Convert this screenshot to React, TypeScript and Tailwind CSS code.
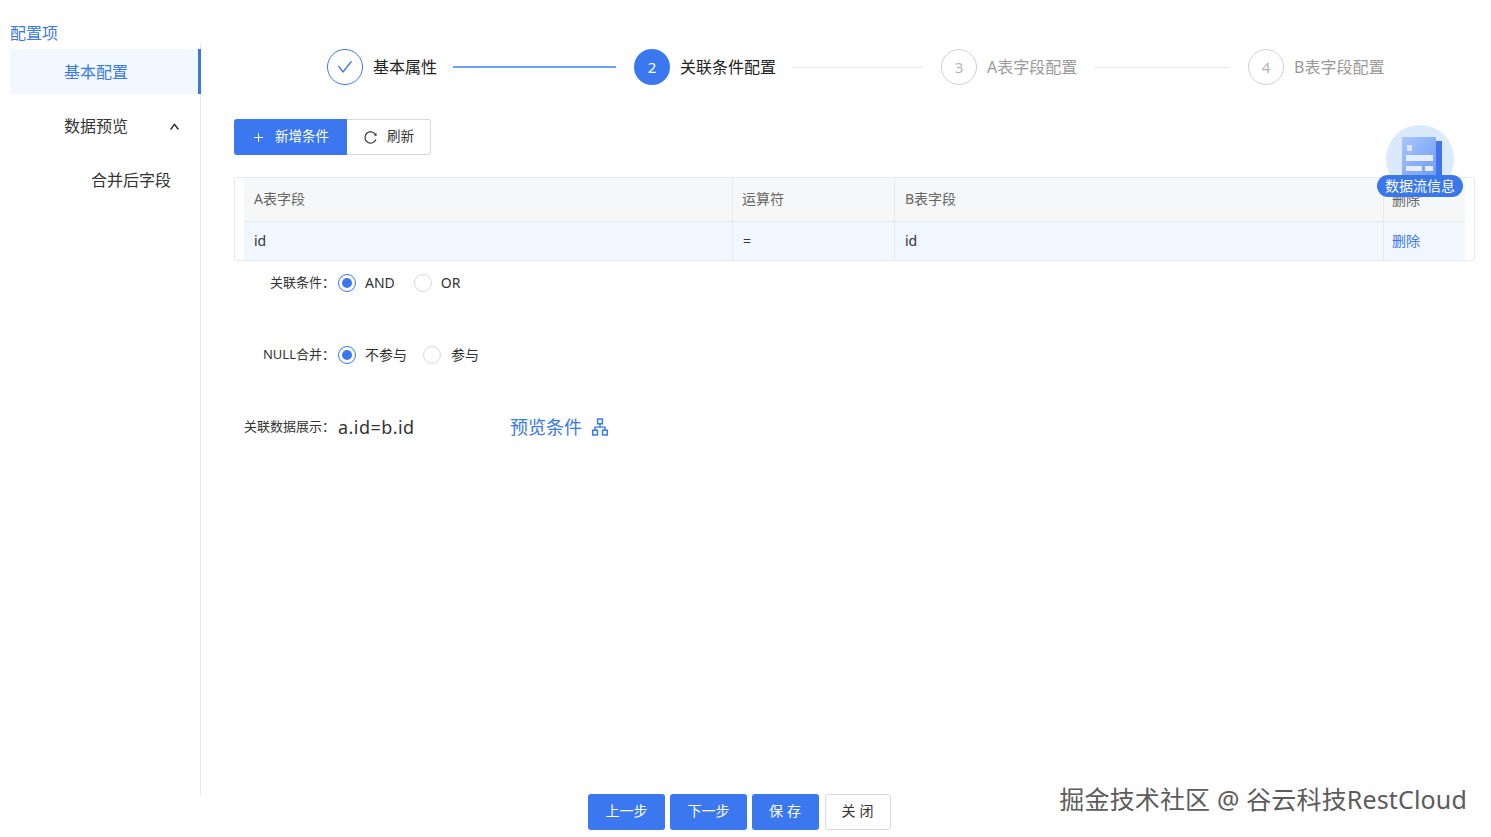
import { AiOutlineApartment, AiOutlineCheck, AiOutlinePlus, AiOutlineReload, AiOutlineUp } from "react-icons/ai";

const font = { fontFamily: '"Noto Sans", "Noto Sans CJK SC", sans-serif' };

function Step({ n, label, state, lineW, labelW }: { n: number; label: string; state: "done" | "active" | "wait"; lineW?: string; labelW: string }) {
  return (
    <div className="flex items-center">
      {state === "done" && (
        <div className="h-9 w-9 rounded-full border border-[#3b78e7] text-[#3b78e7] flex items-center justify-center text-[18px]">
          <AiOutlineCheck />
        </div>
      )}
      {state === "active" && (
        <div className="h-9 w-9 rounded-full bg-[#3b78f0] text-white flex items-center justify-center text-[15px]">{n}</div>
      )}
      {state === "wait" && (
        <div className="h-9 w-9 rounded-full border border-[#d0d0d0] text-[#b5b5b5] flex items-center justify-center text-[15px]">{n}</div>
      )}
      <span className={`ml-[10px] text-[16px] whitespace-nowrap ${labelW} ${state === "wait" ? "text-[#9a9a9a]" : "text-[#222]"}`}>{label}</span>
      {lineW && <div className={`${lineW} ${state === "done" ? "h-[2px] bg-[#6f9ff2]" : "h-px bg-[#e6e6e6]"}`} />}
    </div>
  );
}

function Radio({ label, checked, gap }: { label: string; checked?: boolean; gap: string }) {
  return (
    <div className="flex items-center">
      <div className={`h-[18px] w-[18px] rounded-full border flex items-center justify-center ${checked ? "border-[#3b78e7]" : "border-[#d9d9d9]"}`}>
        {checked && <div className="h-[10px] w-[10px] rounded-full bg-[#3b78f0]" />}
      </div>
      <span className={`${gap} pb-[2px] text-[14px] text-[#333]`}>{label}</span>
    </div>
  );
}

function FieldLabel({ text }: { text: string }) {
  return (
    <span className="w-[96px] flex justify-end text-[13px] text-[#333] whitespace-nowrap">
      {text}
      <span className="w-[8px]">：</span>
    </span>
  );
}

export default function App() {
  return (
    <div style={font} className="relative h-[837px] w-[1491px] overflow-hidden bg-white text-[#222]">
      <div className="flex h-[795px]">
        <div className="w-[201px] shrink-0 pt-[24px] flex flex-col">
          <div className="pl-[10px] text-[16px] leading-[18px] text-[#3b78e7]">配置项</div>
          <div className="mt-px flex-1 border-r border-[#e8e8e8] pl-[10px] pt-[6px]">
            <div className="-mr-px h-[45px] bg-[#f2f8ff] border-r-[3px] border-[#3b78e7] pl-[54px] flex items-center text-[16px] text-[#3b78e7]">基本配置</div>
            <div className="mt-[10px] h-[44px] pl-[54px] pr-[20px] flex items-center justify-between text-[16px] text-[#333]">
              数据预览
              <AiOutlineUp className="text-[11px] stroke-[60] text-[#222]" />
            </div>
            <div className="mt-[10px] h-[44px] pl-[81px] flex items-center text-[16px] text-[#333]">合并后字段</div>
          </div>
        </div>

        <div className="flex-1 pl-[33px] pr-[16px] pt-[49px]">
          <div className="flex items-center pl-[93px]">
            <Step n={1} label="基本属性" state="done" labelW="w-[80px]" lineW="w-[163px]" />
            <div className="w-[18px]" />
            <Step n={2} label="关联条件配置" state="active" labelW="w-[112px]" lineW="w-[131px]" />
            <div className="w-[18px]" />
            <Step n={3} label="A表字段配置" state="wait" labelW="w-[107px]" lineW="w-[135px]" />
            <div className="w-[19px]" />
            <Step n={4} label="B表字段配置" state="wait" labelW="w-[90px]" />
          </div>

          <div className="mt-[34px] flex">
            <button className="h-9 w-[113px] rounded-l-[3px] bg-[#3b78f0] text-white text-[13.5px] flex items-center justify-center gap-[10px]">
              <AiOutlinePlus className="text-[13px]" />
              <span className="pb-[2px]">新增条件</span>
            </button>
            <button className="h-9 w-[84px] rounded-r-[3px] border border-l-0 border-[#d9d9d9] text-[13.5px] text-[#333] flex items-center justify-center gap-[9px]">
              <AiOutlineReload className="text-[15px]" />
              <span className="pb-[2px]">刷新</span>
            </button>
          </div>

          <div className="mt-[22px] h-[84px] rounded-[3px] border border-[#e8e8e8] px-[9px]">
            <div className="grid grid-cols-[489px_162px_489px_1fr] h-[44px] bg-[#f6f7f9] border-b border-[#e8e8e8] text-[14px] text-[#666]">
              <div className="pl-[10px] pb-[2px] flex items-center border-r border-[#e8e8e8]">A表字段</div>
              <div className="pl-[9px] pb-[2px] flex items-center border-r border-[#e8e8e8]">运算符</div>
              <div className="pl-[10px] pb-[2px] flex items-center border-r border-[#e8e8e8]">B表字段</div>
              <div className="pl-[8px] flex items-center">删除</div>
            </div>
            <div className="grid grid-cols-[489px_162px_489px_1fr] h-[38px] bg-[#f0f7ff] text-[14px] text-[#333]">
              <div className="pl-[10px] pb-[2px] flex items-center border-r border-[#e8e8e8]">id</div>
              <div className="pl-[10px] pb-[2px] flex items-center border-r border-[#e8e8e8]">=</div>
              <div className="pl-[10px] pb-[2px] flex items-center border-r border-[#e8e8e8]">id</div>
              <div className="pl-[8px] pb-[2px] flex items-center text-[14px] text-[#3b78e7]">删除</div>
            </div>
          </div>

          <div className="mt-[13px] flex items-center h-[18px]">
            <FieldLabel text="关联条件" />
            <div className="ml-[8px] flex items-center gap-[19px]">
              <Radio label="AND" checked gap="ml-[9px]" />
              <Radio label="OR" gap="ml-[9px]" />
            </div>
          </div>
          <div className="mt-[54px] flex items-center h-[18px]">
            <FieldLabel text="NULL合并" />
            <div className="ml-[8px] flex items-center gap-[16px]">
              <Radio label="不参与" checked gap="ml-[9px]" />
              <Radio label="参与" gap="ml-[10px]" />
            </div>
          </div>
          <div className="mt-[54px] flex items-center h-[18px]">
            <FieldLabel text="关联数据展示" />
            <span className="ml-[8px] w-[172px] text-[18px] tracking-[0.45px] text-[#333]">a.id=b.id</span>
            <span className="text-[18px] text-[#3b78e7]">预览条件</span>
            <AiOutlineApartment className="ml-[8px] text-[20px] text-[#3b78e7]" />
          </div>
        </div>
      </div>

      <div className="flex justify-center gap-[5px] pr-[12px] text-[14px] mt-[-1px]">
        <button className="h-9 w-[77px] pb-[3px] rounded-[3px] bg-[#3b78f0] text-white">上一步</button>
        <button className="h-9 w-[77px] pb-[3px] rounded-[3px] bg-[#3b78f0] text-white">下一步</button>
        <button className="h-9 w-[67px] pb-[3px] pl-[3px] rounded-[3px] bg-[#3b78f0] text-white tracking-[4px]">保存</button>
        <button className="ml-[1px] h-9 w-[66px] pb-[3px] pl-[3px] rounded-[3px] border border-[#d9d9d9] bg-white text-[#333] tracking-[4px]">关闭</button>
      </div>

      <div className="absolute left-[1377px] top-[125px] w-[86px] flex flex-col items-center">
        <div className="h-[68px] w-[68px] rounded-full bg-[#dbe9fd] pl-[16px] pt-[12px]">
          <svg width="40" height="38" viewBox="0 0 40 38">
            <defs>
              <linearGradient id="docFill" x1="0" y1="0" x2="1" y2="1">
                <stop offset="0" stopColor="#a9c5fb" />
                <stop offset="1" stopColor="#6f9cf7" />
              </linearGradient>
            </defs>
            <rect x="34" y="4" width="6" height="34" fill="#3f74ee" />
            <rect x="0" y="0" width="34" height="38" fill="url(#docFill)" />
            <rect x="5" y="8" width="5" height="6" fill="#dbe7fe" />
            <rect x="4" y="18" width="27" height="6" fill="#e6eefe" />
            <rect x="4" y="29" width="16" height="5" fill="#e6eefe" />
            <rect x="23" y="29" width="8" height="5" fill="#e6eefe" />
          </svg>
        </div>
        <div className="-mt-[18px] h-[22px] w-[86px] pb-[2px] rounded-full bg-[#3b78e7] text-white text-[14px] flex items-center justify-center whitespace-nowrap">数据流信息</div>
      </div>

      <div className="absolute right-[24px] top-[782px] text-[25px] tracking-[0.15px] leading-[34px] text-[#5c5c5c] whitespace-nowrap [text-shadow:0_0_1px_#fff,1px_1px_1px_#fff]">
        掘金技术社区 @ 谷云科技RestCloud
      </div>
    </div>
  );
}
